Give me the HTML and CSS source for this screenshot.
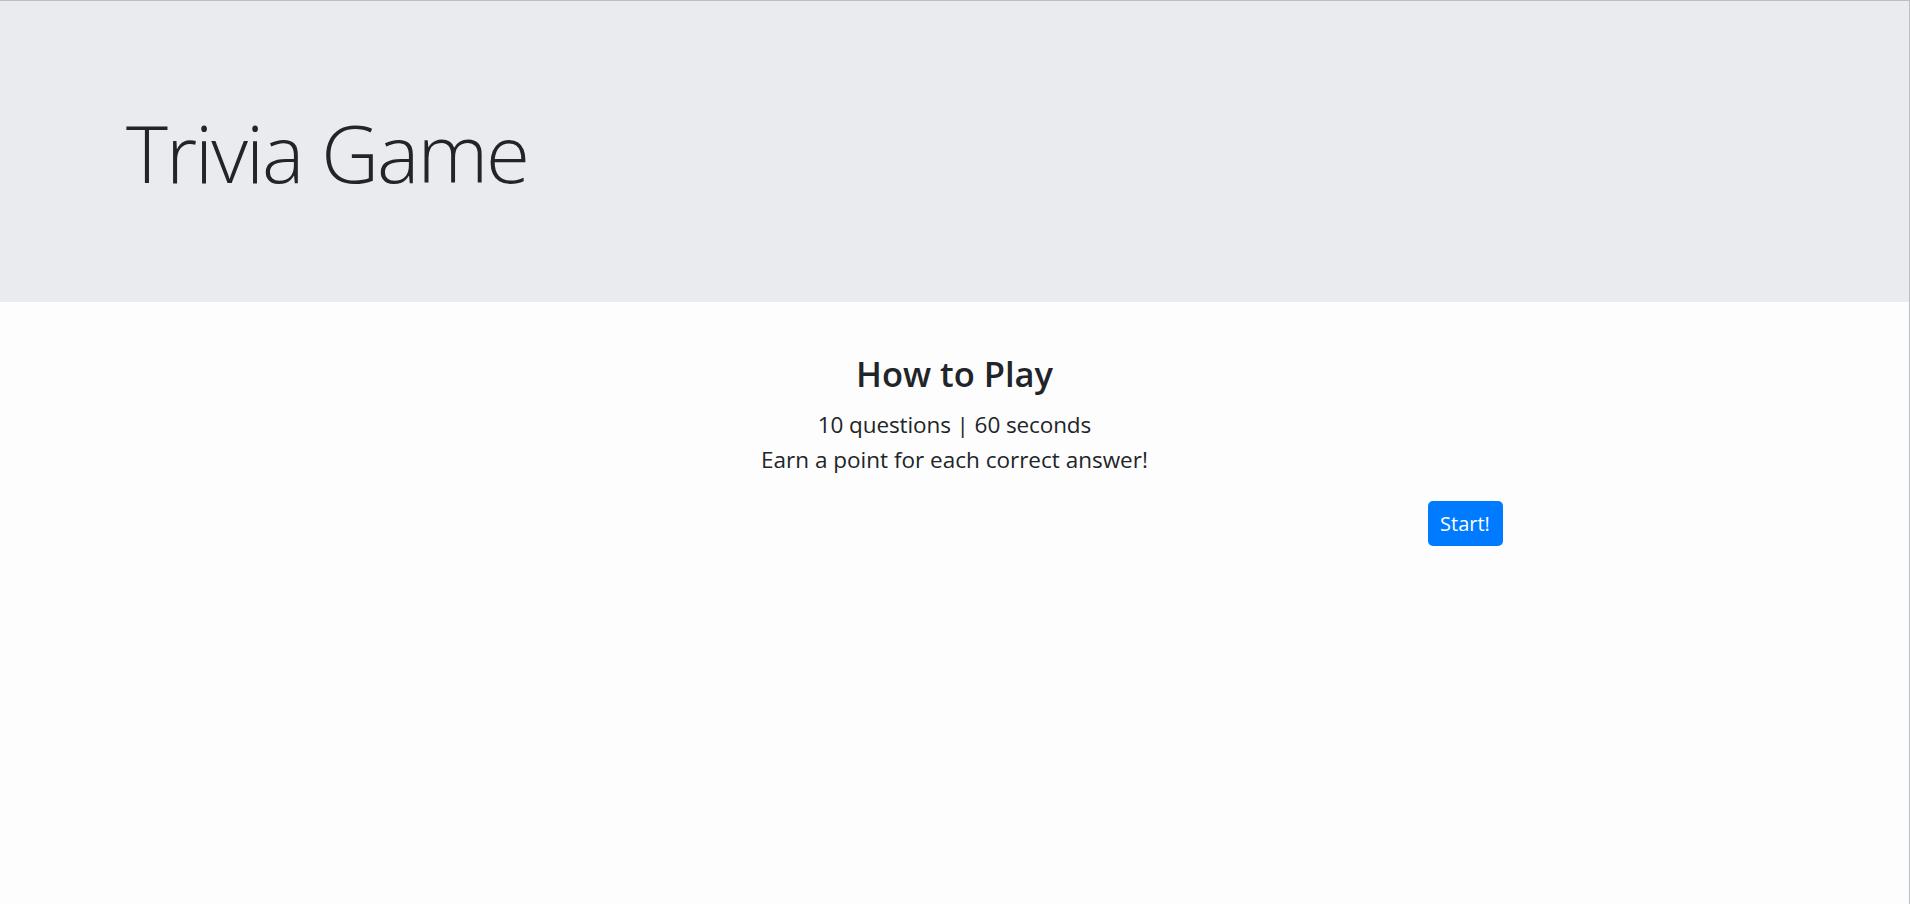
FILE: index.html
```html
<!DOCTYPE html>
<html lang="en">
<head>
<meta charset="utf-8">
<title>Trivia Game</title>
<link rel="stylesheet" href="styles.css">
</head>
<body>
<div class="frame">
  <header class="jumbo">
    <h1 class="title">Trivia Game</h1>
  </header>
  <main class="content">
    <section class="intro">
      <h2 class="intro-heading">How to Play</h2>
      <p class="intro-line">10 questions | 60 seconds</p>
      <p class="intro-line">Earn a point for each correct answer!</p>
    </section>
    <div class="actions">
      <button class="btn-start" type="button">Start!</button>
    </div>
  </main>
</div>
</body>
</html>
```

FILE: styles.css
```css
html, body {
  margin: 0;
  padding: 0;
  height: 100%;
}

body {
  background: #fdfdfd;
  font-family: "Open Sans", "Noto Sans", sans-serif;
  color: #212529;
}

.frame {
  box-sizing: border-box;
  height: 100%;
  border-top: 1px solid #bcbec2;
  border-right: 1px solid #bcbec2;
}

.jumbo {
  height: 301px;
  background: #e9ebef;
  display: flex;
  align-items: center;
  padding-left: 126px;
  box-sizing: border-box;
}

.title {
  margin: 0;
  font-size: 80px;
  font-weight: 300;
  letter-spacing: -2px;
  line-height: 1.2;
  color: #212529;
}

.content {
  display: flex;
  flex-direction: column;
  align-items: center;
  padding-top: 51px;
}

.intro {
  text-align: center;
}

.intro-heading {
  margin: 0 0 13px;
  font-size: 34.5px;
  font-weight: 600;
  line-height: 1.2;
}

.intro-line {
  margin: 0;
  font-size: 22.5px;
  line-height: 35px;
}

.intro-line:first-of-type {
  letter-spacing: -0.1px;
}

.actions {
  width: 1096px;
  display: flex;
  justify-content: flex-end;
  margin-top: 24px;
}

.btn-start {
  width: 75px;
  height: 45px;
  border: none;
  border-radius: 5px;
  background: #007bff;
  color: #fff;
  font-family: inherit;
  font-size: 20px;
  padding: 0;
  cursor: pointer;
}
```
